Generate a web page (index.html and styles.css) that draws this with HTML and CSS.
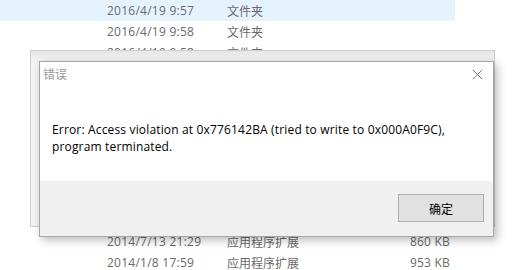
FILE: index.html
```html
<!DOCTYPE html>
<html lang="zh-CN">
<head>
<meta charset="utf-8">
<title>错误</title>
<link rel="stylesheet" href="styles.css">
</head>
<body>
<div class="explorer">
  <div class="row row-hover"><span class="c-date">2016/4/19 9:57</span><span class="c-type">文件夹</span><span class="c-size"></span></div>
  <div class="row"><span class="c-date">2016/4/19 9:58</span><span class="c-type">文件夹</span><span class="c-size"></span></div>
  <div class="row"><span class="c-date">2016/4/19 9:58</span><span class="c-type">文件夹</span><span class="c-size"></span></div>
  <div class="row"></div>
  <div class="row"></div>
  <div class="row"></div>
  <div class="row"></div>
  <div class="row"></div>
  <div class="row"></div>
  <div class="row"></div>
  <div class="row"></div>
  <div class="row"><span class="c-date">2014/7/13 21:29</span><span class="c-type">应用程序扩展</span><span class="c-size">860 KB</span></div>
  <div class="row"><span class="c-date">2014/1/8 17:59</span><span class="c-type">应用程序扩展</span><span class="c-size">953 KB</span></div>
</div>

<div class="backwin"></div>

<div class="dialog">
  <div class="titlebar">
    <span class="title">错误</span>
    <svg class="close" width="12" height="12" viewBox="0 0 12 12"><path d="M1 1 L11 11 M11 1 L1 11" stroke="#6f6f6f" stroke-width="1" fill="none"/></svg>
  </div>
  <div class="content">
    <p class="msg">Error: Access violation at 0x776142BA (tried to write to 0x000A0F9C),<br>program terminated.</p>
  </div>
  <div class="footer">
    <button class="btn">确定</button>
  </div>
</div>
</body>
</html>
```

FILE: styles.css
```css
html, body {
  margin: 0;
  padding: 0;
  background: #ffffff;
  width: 523px;
  height: 270px;
  overflow: hidden;
  font-family: "Open Sans", "Noto Sans CJK SC", sans-serif;
  font-size: 12px;
}

.explorer {
  display: flex;
  flex-direction: column;
}

.row {
  display: grid;
  grid-template-columns: 107px 120px 150px 73px;
  grid-template-areas: ". date type size";
  width: 455px;
  height: 21px;
  line-height: 21px;
  color: #6a6a6a;
}

.row-hover {
  background: #e5f3ff;
}

.c-date { grid-area: date; letter-spacing: 0.25px; }
.c-type { grid-area: type; font-family: "Noto Sans CJK SC", sans-serif; }
.c-size { grid-area: size; text-align: right; letter-spacing: 0.2px; }

.backwin {
  position: absolute;
  left: 30px;
  top: 50px;
  width: 465px;
  height: 177px;
  box-sizing: border-box;
  border: 1px solid #cfcfcf;
  background: linear-gradient(to bottom, #e6e6e6 0px, #f3f3f3 10px, #f3f3f3 100%);
}

.dialog {
  position: absolute;
  left: 39px;
  top: 61px;
  width: 455px;
  height: 176px;
  box-sizing: border-box;
  border: 1px solid #a6a6a6;
  background: #ffffff;
  display: flex;
  flex-direction: column;
  box-shadow: 3px 3px 9px rgba(0, 0, 0, 0.28);
}

.titlebar {
  height: 30px;
  display: flex;
  align-items: flex-start;
  justify-content: space-between;
  padding: 3px 10px 0 3px;
}

.title {
  font-family: "Noto Sans CJK SC", sans-serif;
  color: #9a9a9a;
  font-size: 12px;
  line-height: 17px;
}

.close {
  margin-top: 4px;
  width: 11px;
  height: 11px;
}

.content {
  flex: 1;
  padding: 26px 0 0 12px;
}

.msg {
  margin: 0;
  color: #000;
  font-size: 12px;
  line-height: 17px;
  letter-spacing: 0.16px;
}

.footer {
  height: 55px;
  background: #f0f0f0;
  display: flex;
  justify-content: flex-end;
  align-items: flex-start;
  padding: 13px 9px 0 0;
  box-sizing: border-box;
}

.btn {
  width: 86px;
  height: 28px;
  box-sizing: border-box;
  border: 1px solid #adadad;
  background: #e1e1e1;
  font-family: "Noto Sans CJK SC", sans-serif;
  font-size: 12px;
  color: #000;
  padding: 0;
}
```
